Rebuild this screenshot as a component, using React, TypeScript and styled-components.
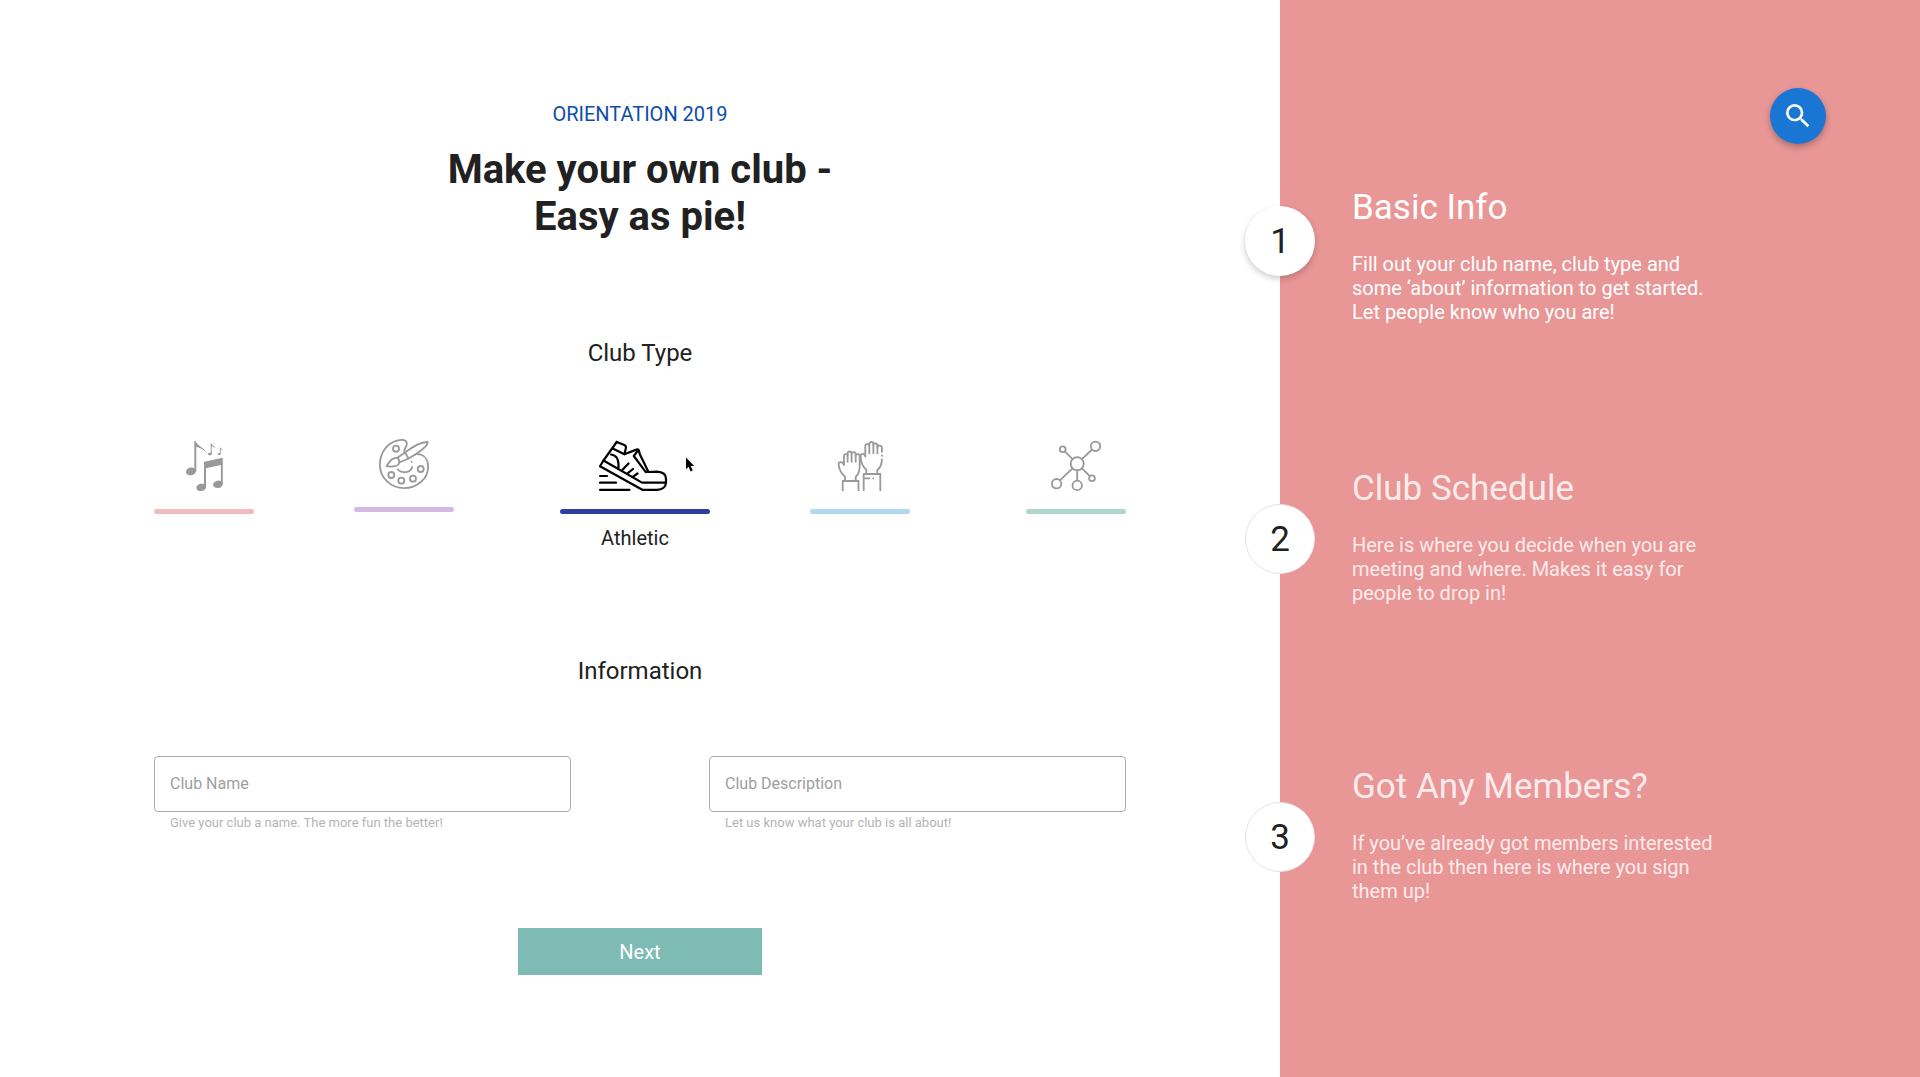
import React, { useState } from "react";
import styled, { createGlobalStyle } from "styled-components";
import { MdSearch } from "react-icons/md";

const GlobalStyle = createGlobalStyle`
  * { box-sizing: border-box; }
  body {
    margin: 0;
    background: #ffffff;
    color: #212121;
    font-family: Roboto, "Liberation Sans", sans-serif;
  }
  h1, h2, h3, p, ol { margin: 0; padding: 0; font-weight: 400; }
  button, input { font-family: inherit; }
`;

const Page = styled.div`
  display: grid;
  grid-template-columns: 2fr 1fr;
  min-height: 100vh;
`;

const Main = styled.main`
  display: flex;
  flex-direction: column;
  align-items: center;
  padding: 102px 154px;
`;

const Eyebrow = styled.p`
  font-size: 20px;
  line-height: 24px;
  color: #0d4da8;
`;

const Title = styled.h1`
  margin-top: 20px;
  font-size: 40px;
  line-height: 47px;
  font-weight: 700;
  text-align: center;
`;

const Section = styled.section`
  width: 100%;
  margin-top: ${(p: { $gap: number }) => p.$gap}px;
`;

const SectionTitle = styled.h2`
  font-size: 24px;
  line-height: 28px;
  text-align: center;
`;

const TypeGrid = styled.div`
  display: grid;
  grid-template-columns: 200fr 206fr 250fr 216fr 100fr;
  align-items: start;
  justify-items: start;
  margin-top: 72px;
`;

const TypeOption = styled.label<{ $active: boolean }>`
  position: relative;
  display: flex;
  flex-direction: column;
  align-items: center;
  width: ${(p) => (p.$active ? 150 : 100)}px;
  color: ${(p) => (p.$active ? "#000000" : "#999999")};
  cursor: pointer;
`;

const HiddenRadio = styled.input`
  position: absolute;
  width: 1px;
  height: 1px;
  margin: 0;
  opacity: 0;
`;

const TypeBar = styled.span<{ $color: string }>`
  width: 100%;
  height: 5px;
  margin-top: 18px;
  border-radius: 3px;
  background: ${(p) => p.$color};
`;

const TypeName = styled.span`
  margin-top: 12px;
  font-size: 20px;
  line-height: 24px;
  color: #212121;
`;

const Pointer = styled.svg`
  position: absolute;
  left: 126px;
  top: 18px;
`;

const Fields = styled.div`
  display: flex;
  justify-content: space-between;
  gap: 24px;
  margin-top: 71px;
`;

const Field = styled.div`
  display: flex;
  flex-direction: column;
  flex: 0 1 417px;
`;

const TextInput = styled.input`
  width: 100%;
  height: 56px;
  padding: 0 15px 2px;
  border: 1px solid #acacac;
  border-radius: 4px;
  background: #ffffff;
  color: #212121;
  font-size: 16px;
  &::placeholder { color: #9e9e9e; opacity: 1; }
`;

const Hint = styled.span`
  padding: 3px 16px 0;
  font-size: 13px;
  line-height: 16px;
  color: #b4b4b4;
`;

const NextButton = styled.button`
  width: 244px;
  height: 47px;
  margin-top: 97px;
  border: 0;
  background: #7fbbb5;
  color: #ffffff;
  font-size: 20px;
  line-height: 24px;
  cursor: pointer;
`;

const Side = styled.aside`
  display: flex;
  flex-direction: column;
  padding-top: 88px;
  background: #e89696;
`;

const SearchButton = styled.button`
  display: flex;
  align-items: center;
  justify-content: center;
  align-self: flex-end;
  width: 56px;
  height: 56px;
  margin: 0 94px 25px 0;
  padding: 0;
  border: 0;
  border-radius: 50%;
  background: #1976d2;
  color: #ffffff;
  box-shadow: 0 3px 6px rgba(0, 0, 0, 0.28);
  cursor: pointer;
`;

const Steps = styled.ol`
  list-style: none;
`;

const Step = styled.li`
  display: flex;
  align-items: flex-start;
  gap: 37px;
  min-height: 298px;
`;

const StepNumber = styled.span<{ $active: boolean }>`
  display: flex;
  align-items: center;
  justify-content: center;
  flex: none;
  width: 70px;
  height: 70px;
  margin: 37px 0 0 -35px;
  padding-top: 2px;
  border: ${(p) => (p.$active ? "0" : "1px solid #e4e4e4")};
  border-radius: 50%;
  background: #ffffff;
  box-shadow: ${(p) => (p.$active ? "0 3px 6px rgba(0, 0, 0, 0.2)" : "none")};
  font-size: 35px;
  line-height: 42px;
`;

const StepText = styled.div<{ $active: boolean }>`
  max-width: 370px;
  padding-top: ${(p) => (p.$active ? 18 : 1)}px;
  color: ${(p) => (p.$active ? "#ffffff" : "#fdebeb")};
`;

const StepTitle = styled.h3`
  margin-bottom: 23px;
  font-size: 35px;
  line-height: 42px;
`;

const StepBody = styled.p`
  font-size: 20px;
  line-height: 24px;
`;

const MusicIcon = () => (
  <svg width="50" height="52" viewBox="0 0 50 52" fill="currentColor" aria-hidden="true">
    <path d="M15.3 2h1.2c1 4.500 9 6.500 11.600 12.600-3-3.600-7-6-10.800-6.800V32.500h-2z" />
    <ellipse cx="12" cy="32.400" rx="5" ry="3.900" transform="rotate(-12 12 32.400)" />
    <path d="M25 22.700l18.800-4V45.500h-1.900V26L27 29.300V49h-2z" />
    <ellipse cx="22.200" cy="48.400" rx="4.900" ry="3.700" transform="rotate(-12 22.200 48.400)" />
    <ellipse cx="38.900" cy="45.300" rx="4.900" ry="3.700" transform="rotate(-12 38.900 45.300)" />
    <path d="M31.700 4.200h.6c.4 1.800 3.400 2.400 4.100 5-1.200-1.400-2.400-2-3.700-2.300V15h-1z" />
    <ellipse cx="30.900" cy="15" rx="1.900" ry="1.300" />
    <path d="M40.900 8.400h.5c.3 1.300 2.400 1.700 2.900 3.500-.9-1-1.700-1.400-2.600-1.600V15h-.8z" />
    <ellipse cx="40.200" cy="15" rx="1.500" ry="1.100" />
  </svg>
);

const PaletteIcon = () => (
  <svg width="50" height="50" viewBox="0 0 50 50" fill="none" stroke="currentColor" strokeWidth="1.800" strokeLinecap="round" strokeLinejoin="round" aria-hidden="true">
    <path d="M25.500 13.500C24.300 9.500 29 7 27.700 3.500 26.500.3 22 .6 18 1.700 7 4.500.9 15 .9 26 .9 39 12 49.100 25 49.100S49.100 40 49.100 28c0-7.500-4-12.600-11-12.800" />
    <path d="M26 13.500C32 9 42 2.700 48.600 3c1 3.500-9 11-19 16.500" />
    <path d="M18.300 18.800l7.700-5.300 3.600 6-9.300 4" />
    <path d="M18.300 18.800c-5.300-.3-7.300 3-10.800 8.400 6 .8 12.300.3 12.800-3.700.2-1.700-.6-3.500-2-4.700z" />
    <circle cx="17" cy="9.700" r="3" />
    <circle cx="12.300" cy="36" r="3" />
    <circle cx="22.300" cy="41.700" r="3" />
    <circle cx="34" cy="39.700" r="3" />
    <circle cx="41.700" cy="30" r="3" />
    <path d="M18.700 30.500c3.800 4 12.600 4 14.600-2.500M32.700 22.700v.1" />
  </svg>
);

const ShoeIcon = () => (
  <svg width="72" height="52" viewBox="0 0 72 52" fill="none" stroke="currentColor" strokeWidth="2.200" strokeLinecap="round" strokeLinejoin="round" aria-hidden="true">
    <path d="M17.700 3L4.500 21.500 1 27.300 43.300 50.800H58c5.500 0 9-3 9-7.500v-3.500c0-4.500-3.500-6.800-9.300-7.100L49 33" />
    <path d="M17.700 3l7 2.700c2 .8 2.600 1.600 2.200 3.200l-1.500 6.300 12-4.600c1.500-.5 2.300-.1 2.600 1.200l.6 3L49 32l-2.200 1.200L34.800 17l4-5.400" />
    <path d="M13.700 9.500l11.700 5.700M4.500 21.500L43 43.600h24M12 15.500c5.500 1 7.800 3.800 7.500 13.500" />
    <path d="M29.500 24.500l-6 6.300M34 30l-5.500 4.300M38.500 34.500l-4.700 3.400" />
    <path d="M1 37h7M1 43.700h16M1 50.800h29.500" />
  </svg>
);

const HandsIcon = () => (
  <svg width="46" height="52" viewBox="0 0 46 52" fill="none" stroke="currentColor" strokeWidth="1.800" strokeLinejoin="round" aria-hidden="true">
    <path d="M5.700 52V42h15.800v10M8 42v-4.500C4 34.500 2 30 1.600 25c0-2.700 4.600-2.500 5.400 1V17c0-2.500 3.600-2.500 3.600-.5v-2c0-2.700 4-2.700 4 0 0-2 4-2 4 .5v1.500c0-2 4.100-2 4.100.5v10c0 4.500-1 8-4 11V42" />
    <path d="M10.600 15v8.500M14.600 14v9.500M18.700 15.500v8" />
    <path d="M26.700 52V35h16.600v17M29.300 35v-4.500c-4-3-5.600-7.500-5.700-13.500 0-3 4-2.700 4.700.5V7c0-2.500 4-2.500 4-.5V5c0-2.700 4.100-2.700 4.100 0v1c0-2.200 4-2.200 4 .3V8c0-2.200 4.500-2 4.500.8v4.700M44.900 15.800v1.700M44.900 19.700c.1 5-1.500 9-4.600 11.300v4" />
    <path d="M32.300 6v9M36.400 5.500V15M40.400 7v8M27 39.300h6M35.500 39.300h1.600" />
  </svg>
);

const NetworkIcon = () => (
  <svg width="50" height="52" viewBox="0 0 50 52" fill="none" stroke="currentColor" strokeWidth="1.800" aria-hidden="true">
    <circle cx="26.200" cy="24.700" r="6.500" />
    <circle cx="44.500" cy="7.300" r="4.700" />
    <circle cx="11.700" cy="10.300" r="2.900" />
    <circle cx="5.600" cy="44.700" r="4.700" />
    <circle cx="26.200" cy="46.400" r="4.700" />
    <circle cx="41" cy="39.300" r="2.900" />
    <path d="M30.900 20.200L41.100 10.500M21.600 20.100L13.800 12.300M21.600 29.300L8.900 41.400M26.200 31.200V42M30.900 29.300L38.900 37.200" />
  </svg>
);

const clubTypes = [
  { name: "Music", color: "#f2bbbe", Icon: MusicIcon },
  { name: "Arts", color: "#d5b8e2", Icon: PaletteIcon },
  { name: "Athletic", color: "#303f9f", Icon: ShoeIcon },
  { name: "Volunteering", color: "#b0d8f1", Icon: HandsIcon },
  { name: "Networking", color: "#aed5ce", Icon: NetworkIcon },
];

const fields = [
  { id: "club-name", label: "Club Name", hint: "Give your club a name. The more fun the better!" },
  { id: "club-description", label: "Club Description", hint: "Let us know what your club is all about!" },
];

const steps = [
  {
    title: "Basic Info",
    body: "Fill out your club name, club type and some ‘about’ information to get started. Let people know who you are!",
  },
  {
    title: "Club Schedule",
    body: "Here is where you decide when you are meeting and where. Makes it easy for people to drop in!",
  },
  {
    title: "Got Any Members?",
    body: "If you’ve already got members interested in the club then here is where you sign them up!",
  },
];

export default function App() {
  const [selected, setSelected] = useState("Athletic");
  const currentStep = 0;

  return (
    <>
      <GlobalStyle />
      <Page>
        <Main>
          <Eyebrow>ORIENTATION 2019</Eyebrow>
          <Title>
            Make your own club -<br />
            Easy as pie!
          </Title>

          <Section $gap={99}>
            <SectionTitle id="type-title">Club Type</SectionTitle>
            <TypeGrid role="radiogroup" aria-labelledby="type-title">
              {clubTypes.map(({ name, color, Icon }) => {
                const active = name === selected;
                return (
                  <TypeOption key={name} $active={active}>
                    <HiddenRadio
                      type="radio"
                      name="club-type"
                      aria-label={name}
                      checked={active}
                      onChange={() => setSelected(name)}
                    />
                    <Icon />
                    <TypeBar $color={color} />
                    {active && <TypeName>{name}</TypeName>}
                    {active && (
                      <Pointer width="10" height="16" viewBox="0 0 10 16" aria-hidden="true">
                        <path d="M0 .5v11.700l2.600-2.400 2 4.700 2.100-.9-2-4.500h3.500z" fill="#000" />
                      </Pointer>
                    )}
                  </TypeOption>
                );
              })}
            </TypeGrid>
          </Section>

          <Section $gap={107}>
            <SectionTitle>Information</SectionTitle>
            <Fields>
              {fields.map((f) => (
                <Field key={f.id}>
                  <TextInput
                    id={f.id}
                    type="text"
                    placeholder={f.label}
                    aria-label={f.label}
                    aria-describedby={`${f.id}-hint`}
                  />
                  <Hint id={`${f.id}-hint`}>{f.hint}</Hint>
                </Field>
              ))}
            </Fields>
          </Section>

          <NextButton type="button">Next</NextButton>
        </Main>

        <Side>
          <SearchButton type="button" aria-label="Search">
            <MdSearch size={32} />
          </SearchButton>
          <Steps>
            {steps.map((s, i) => {
              const active = i === currentStep;
              return (
                <Step key={s.title}>
                  <StepNumber $active={active}>{i + 1}</StepNumber>
                  <StepText $active={active}>
                    <StepTitle>{s.title}</StepTitle>
                    <StepBody>{s.body}</StepBody>
                  </StepText>
                </Step>
              );
            })}
          </Steps>
        </Side>
      </Page>
    </>
  );
}
